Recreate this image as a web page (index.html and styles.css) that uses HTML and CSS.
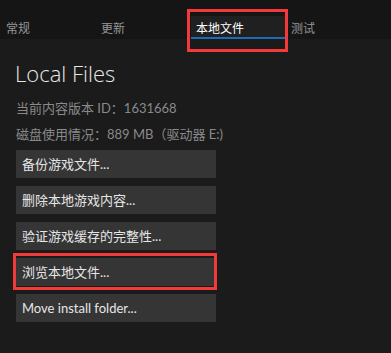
FILE: index.html
```html
<!DOCTYPE html>
<html lang="zh-CN">
<head>
<meta charset="utf-8">
<title>Local Files</title>
<link rel="stylesheet" href="styles.css">
</head>
<body>
<div class="tabs">
  <div class="tab">常规</div>
  <div class="tab">更新</div>
  <div class="tab active">本地文件</div>
  <div class="tab">测试</div>
</div>
<div class="content">
  <h1 class="title">Local Files</h1>
  <div class="info">当前内容版本 ID：1631668</div>
  <div class="info">磁盘使用情况：889 MB（驱动器 E:)</div>
  <div class="buttons">
    <div class="btn">备份游戏文件...</div>
    <div class="btn">删除本地游戏内容...</div>
    <div class="btn">验证游戏缓存的完整性...</div>
    <div class="btn">浏览本地文件...</div>
    <div class="btn">Move install folder...</div>
  </div>
</div>
<div class="highlight hl-tab"></div>
<div class="highlight hl-btn"></div>
</body>
</html>
```
FILE: styles.css
```css
html, body {
  margin: 0;
  padding: 0;
}
body {
  background: #1b1b1b;
  font-family: Lato, "Noto Sans CJK SC", sans-serif;
  position: relative;
  width: 391px;
  height: 353px;
  overflow: hidden;
}
.tabs {
  height: 39px;
  background: #151515;
  display: flex;
  align-items: flex-end;
  padding-left: 1px;
  box-sizing: border-box;
}
.tab {
  width: 94px;
  margin-right: 1px;
  height: 23px;
  line-height: 24px;
  padding-left: 5px;
  box-sizing: border-box;
  font-family: "Noto Sans CJK SC", sans-serif;
  font-size: 12px;
  color: #959595;
}
.tab.active {
  background: #202020;
  color: #ffffff;
  box-shadow: inset 0 -2px 0 #1d6bb8;
}
.content {
  padding: 0 15px;
}
.title {
  margin: 19px 0 7px 0;
  font-family: "Open Sans", sans-serif;
  font-weight: 300;
  font-size: 22px;
  line-height: 30px;
  color: #e8e8e8;
}
.info {
  font-size: 13px;
  line-height: 26px;
  color: #8a8a8a;
  padding-left: 1px;
}
.buttons {
  margin-top: 3px;
  padding-left: 1px;
  display: flex;
  flex-direction: column;
  gap: 8px;
}
.btn {
  width: 200px;
  height: 28px;
  line-height: 28px;
  background: #353535;
  color: #e6e6e6;
  font-size: 13px;
  padding-left: 6px;
  box-sizing: border-box;
}
.highlight {
  position: absolute;
  border: 3px solid #f23a3a;
  box-sizing: border-box;
}
.hl-tab {
  left: 187px;
  top: 9px;
  width: 101px;
  height: 43px;
}
.hl-btn {
  left: 13px;
  top: 253px;
  width: 204px;
  height: 37px;
}
```
